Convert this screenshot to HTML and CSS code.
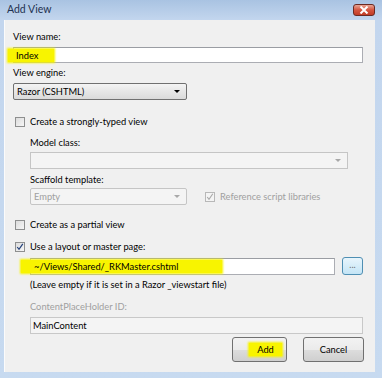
FILE: index.html
```html
<!DOCTYPE html>
<html lang="en">
<head>
    <meta charset="UTF-8">
    <title>Add View</title>
    <link rel="stylesheet" href="styles.css">
</head>
<body>

<div class="window">
    <div class="titlebar">
        <span class="title">Add View</span>
        <div class="close-btn">
            <svg width="10" height="8" viewBox="0 0 10 8">
                <path d="M1.5 0.5 L8.5 7.5 M8.5 0.5 L1.5 7.5" stroke="#ffffff" stroke-width="2"/>
            </svg>
        </div>
    </div>

    <div class="client">
        <div class="label lbl-name">View name:</div>
        <div class="field field-name"><span class="mark mark-index">Index</span></div>

        <div class="label lbl-engine">View engine:</div>
        <div class="select select-engine">
            <span>Razor (CSHTML)</span>
            <span class="arrow"></span>
        </div>

        <div class="check-row row-typed">
            <span class="checkbox"></span>
            <span>Create a strongly-typed view</span>
        </div>

        <div class="indent">
            <div class="label lbl-model">Model class:</div>
            <div class="select select-model disabled">
                <span></span>
                <span class="arrow grey"></span>
            </div>

            <div class="label lbl-scaffold">Scaffold template:</div>
            <div class="scaffold-row">
                <div class="select select-scaffold disabled">
                    <span>Empty</span>
                    <span class="arrow grey"></span>
                </div>
                <div class="check-row disabled-text">
                    <span class="checkbox grey">
                        <svg width="8" height="8" viewBox="0 0 8 8"><path d="M1.2 4 L3 6.3 L6.8 0.8" fill="none" stroke="#a8a8a8" stroke-width="1.1"/></svg>
                    </span>
                    <span>Reference script libraries</span>
                </div>
            </div>
        </div>

        <div class="check-row row-partial">
            <span class="checkbox"></span>
            <span>Create as a partial view</span>
        </div>

        <div class="check-row row-layout">
            <span class="checkbox">
                <svg width="8" height="8" viewBox="0 0 8 8"><path d="M1.2 4 L3 6.3 L6.8 0.8" fill="none" stroke="#23407a" stroke-width="1.2"/></svg>
            </span>
            <span>Use a layout or master page:</span>
        </div>

        <div class="indent">
            <div class="layout-row">
                <div class="field field-layout"><span class="mark mark-path">~/Views/Shared/_RKMaster.cshtml</span></div>
                <div class="browse-btn">...</div>
            </div>
            <div class="label lbl-hint">(Leave empty if it is set in a Razor _viewstart file)</div>

            <div class="label lbl-cph disabled-text">ContentPlaceHolder ID:</div>
            <div class="field field-cph">MainContent</div>
        </div>

        <div class="buttons">
            <div class="btn"><span class="mark mark-add">Add</span></div>
            <div class="btn">Cancel</div>
        </div>
    </div>
</div>

</body>
</html>
```

FILE: styles.css
```css
body {
    margin: 0;
    padding: 0;
    font-family: Lato, "Noto Sans", Arial, sans-serif;
    font-size: 9.3px;
    color: #000000;
}
.window {
    width: 382px;
    height: 378px;
    background: linear-gradient(to bottom, #a9c3e2, #c3d6ee 20px, #c7daf0);
    display: flex;
    flex-direction: column;
    box-sizing: border-box;
}
.titlebar {
    height: 20px;
    display: flex;
    align-items: center;
    justify-content: space-between;
    padding: 0 7px 0 7px;
    flex-shrink: 0;
}
.title {
    font-size: 10.5px;
    color: #1e3250;
    margin-top: -2px;
}
.close-btn {
    width: 22px;
    height: 12px;
    margin-top: -1px;
    background: linear-gradient(to bottom, #e8a595, #d4553f 50%, #c23c26);
    border: 1px solid #6b2a22;
    border-radius: 3px;
    display: flex;
    align-items: center;
    justify-content: center;
    box-sizing: border-box;
}
.client {
    flex: 1;
    margin: 0 7px 6px 4px;
    background: #f0f0f0;
    border-left: 1px solid #fbfbfb;
    padding: 0 0 0 8px;
    box-sizing: border-box;
}
.label {
    line-height: 12px;
    height: 12px;
    white-space: nowrap;
}
.lbl-name { margin-top: 11px; }
.lbl-engine { margin-top: 4px; }
.lbl-model { margin-top: 9px; }
.lbl-scaffold { margin-top: 5px; }
.lbl-hint { margin-top: 4px; }
.lbl-cph { margin-top: 10px; }
.disabled-text { color: #a0a0a0; }

.field {
    height: 17px;
    line-height: 15px;
    border: 1px solid #abadb3;
    border-top-color: #9a9da3;
    background: #ffffff;
    padding-left: 2px;
    box-sizing: border-box;
    white-space: nowrap;
}
.field-name {
    margin-top: 4px;
    margin-right: 12px;
    height: 16px;
}
.field-layout {
    flex: 1;
    padding-left: 3px;
}
.field-cph {
    margin-top: 4px;
    margin-right: 12px;
    background: #f4f4f4;
    border-color: #c8c8c8;
}
.mark {
    background: #f8f400;
    box-shadow: 0 0 2px 1px #f8f400;
    display: inline-block;
    line-height: 13px;
}
.mark-index {
    margin-left: -8px;
    padding: 0 16px 0 8px;
}
.mark-path {
    margin-left: -13px;
    padding: 0 44px 0 13px;
}
.mark-add {
    padding: 0 8px;
    margin-left: 12px;
}

.select {
    height: 17px;
    border: 1px solid #707070;
    border-radius: 2px;
    background: linear-gradient(to bottom, #f4f4f4, #e6e6e6 50%, #dadada);
    display: flex;
    align-items: center;
    justify-content: space-between;
    padding: 0 6px 0 3px;
    box-sizing: border-box;
}
.select-engine {
    margin-top: 4px;
    width: 174px;
}
.select.disabled {
    background: #f4f4f4;
    border-color: #c5c5c5;
    color: #a0a0a0;
}
.select-model {
    margin-top: 3px;
    width: 318px;
    border-radius: 0;
}
.select-scaffold {
    width: 157px;
}
.arrow {
    width: 0;
    height: 0;
    border-left: 3px solid transparent;
    border-right: 3px solid transparent;
    border-top: 3px solid #000000;
}
.arrow.grey {
    border-top-color: #a8a8a8;
}

.check-row {
    display: flex;
    align-items: center;
    line-height: 12px;
    height: 12px;
    gap: 5px;
    white-space: nowrap;
}
.row-typed { margin-top: 16px; margin-left: 2px; }
.row-partial { margin-top: 14px; margin-left: 2px; }
.row-layout { margin-top: 10px; margin-left: 2px; }
.checkbox {
    width: 10px;
    height: 10px;
    border: 1px solid #8e8f8f;
    background: linear-gradient(135deg, #dcdcdc, #f6f6f6);
    box-sizing: border-box;
    display: flex;
    align-items: center;
    justify-content: center;
}
.checkbox.grey {
    border-color: #b8b8b8;
    background: #f4f4f4;
}

.indent {
    padding-left: 17px;
}
.scaffold-row {
    margin-top: 2px;
    display: flex;
    align-items: center;
    gap: 18px;
}
.scaffold-row .check-row {
    margin-top: 1px;
}
.layout-row {
    margin-top: 4px;
    display: flex;
    align-items: center;
    gap: 7px;
    margin-right: 12px;
}
.browse-btn {
    width: 21px;
    height: 18px;
    border: 1px solid #4f8fb3;
    border-radius: 3px;
    background: linear-gradient(to bottom, #e8f5fc, #c4e5f6);
    color: #707070;
    font-size: 9px;
    line-height: 14px;
    text-align: center;
    box-sizing: border-box;
}

.buttons {
    margin-top: 3px;
    display: flex;
    justify-content: flex-end;
    gap: 16px;
    margin-right: 11px;
}
.btn {
    width: 55px;
    height: 25px;
    border: 1px solid #707070;
    border-radius: 3px;
    background: linear-gradient(to bottom, #f2f2f2, #ebebeb 50%, #dddddd 51%, #cfcfcf);
    display: flex;
    align-items: center;
    justify-content: center;
    box-sizing: border-box;
}
.btn + .btn {
    width: 61px;
}
```
